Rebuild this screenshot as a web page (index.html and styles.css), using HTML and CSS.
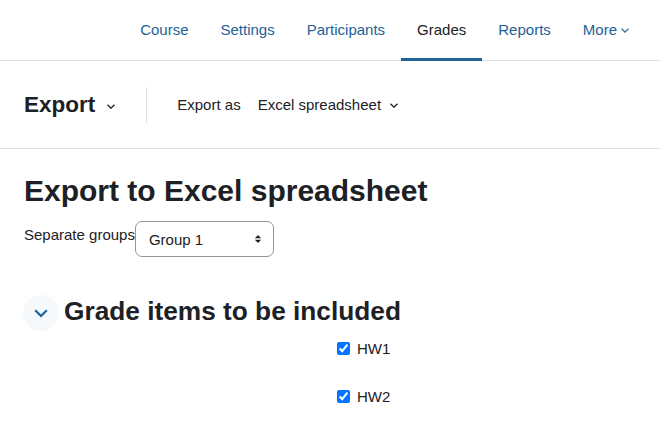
FILE: index.html
```html
<!DOCTYPE html>
<html lang="en">
<head>
<meta charset="utf-8">
<title>Export to Excel spreadsheet</title>
<link rel="stylesheet" href="styles.css">
</head>
<body>
<nav class="secnav">
  <a class="navlink" href="#">Course</a>
  <a class="navlink" href="#">Settings</a>
  <a class="navlink" href="#">Participants</a>
  <a class="navlink active" href="#">Grades</a>
  <a class="navlink" href="#">Reports</a>
  <a class="navlink" href="#">More<svg class="chev-sm" width="8" height="5" viewBox="0 0 8 5"><polyline points="0.5,0.7 4,4.2 7.5,0.7" fill="none" stroke="currentColor" stroke-width="1.2"/></svg></a>
</nav>
<header class="tertiary">
  <div class="pagetitle">Export<svg class="chev-dark" width="8" height="5" viewBox="0 0 8 5"><polyline points="0.5,0.7 4,4.2 7.5,0.7" fill="none" stroke="#1d2125" stroke-width="1.3"/></svg></div>
  <div class="divider"></div>
  <span class="exportas">Export as</span>
  <span class="format">Excel spreadsheet<svg class="chev-dark" width="8" height="5" viewBox="0 0 8 5"><polyline points="0.5,0.7 4,4.2 7.5,0.7" fill="none" stroke="#1d2125" stroke-width="1.3"/></svg></span>
</header>
<main class="content">
  <h2 class="title">Export to Excel spreadsheet</h2>
  <div class="grouprow">
    <label class="grouplabel" for="grp">Separate groups</label>
    <div class="selectwrap">
      <select id="grp" class="groupselect"><option>Group 1</option></select>
      <svg class="updown" width="8" height="10" viewBox="0 0 8 10"><path d="M4 1L0.8 4.2h6.4z M4 9L0.8 5.8h6.4z" fill="#1d2125"/></svg>
    </div>
  </div>
  <div class="sectionhead">
    <span class="collapsebtn"><svg width="14" height="9" viewBox="0 0 14 9"><polyline points="1.2,1.2 7,7 12.8,1.2" fill="none" stroke="#1d6298" stroke-width="2.2"/></svg></span>
    <h3 class="sectiontitle">Grade items to be included</h3>
  </div>
  <div class="items">
    <label class="item"><input type="checkbox" checked><span>HW1</span></label>
    <label class="item"><input type="checkbox" checked><span>HW2</span></label>
  </div>
</main>
</body>
</html>
```

FILE: styles.css
```css
html, body {
  margin: 0;
  padding: 0;
  background: #fff;
}
body {
  font-family: "Liberation Sans", Arial, sans-serif;
  font-size: 15px;
  color: #1d2125;
}
.secnav {
  display: flex;
  justify-content: flex-end;
  height: 60px;
  border-bottom: 1px solid #dee2e6;
  padding-right: 15px;
}
.navlink {
  display: flex;
  align-items: center;
  padding: 0 16px;
  margin-bottom: -1px;
  border-bottom: 3px solid transparent;
  color: #1d6298;
  text-decoration: none;
  font-size: 15px;
}
.navlink.active {
  color: #1d2125;
  border-bottom-color: #1d6298;
}
.chev-sm {
  margin-left: 4px;
  margin-top: 2px;
}
.tertiary {
  display: flex;
  align-items: center;
  height: 87px;
  border-bottom: 1px solid #dee2e6;
  padding-left: 24px;
}
.pagetitle {
  font-size: 22.5px;
  font-weight: bold;
  display: flex;
  align-items: center;
}
.pagetitle .chev-dark {
  margin-left: 12px;
  margin-top: 3px;
}
.divider {
  width: 1px;
  height: 36px;
  background: #dee2e6;
  margin: 0 30px 0 31px;
}
.exportas {
  margin-right: 17px;
}
.format {
  display: flex;
  align-items: center;
}
.format .chev-dark {
  margin-left: 9px;
  margin-top: 1px;
}
.content {
  padding-left: 24px;
}
.title {
  font-size: 30px;
  font-weight: bold;
  line-height: 36px;
  margin: 24px 0 12px 0;
}
.grouprow {
  display: flex;
  align-items: flex-start;
}
.grouplabel {
  line-height: 22.5px;
  padding-top: 3px;
}
.selectwrap {
  position: relative;
}
.groupselect {
  appearance: none;
  -webkit-appearance: none;
  width: 139px;
  height: 36px;
  border: 1px solid #8f959e;
  border-radius: 7px;
  background: #fff;
  font-family: "Liberation Sans", Arial, sans-serif;
  font-size: 15px;
  color: #1d2125;
  padding: 0 0 0 13px;
  margin: 0;
  display: block;
}
.updown {
  position: absolute;
  left: 119px;
  top: 13px;
  pointer-events: none;
}
.sectionhead {
  display: flex;
  align-items: center;
  margin-top: 38px;
}
.collapsebtn {
  width: 36px;
  height: 36px;
  border-radius: 50%;
  background: #f5f9fc;
  display: flex;
  align-items: center;
  justify-content: center;
  margin-left: -1px;
  padding-top: 1px;
  box-sizing: border-box;
}
.sectiontitle {
  font-size: 26.25px;
  font-weight: bold;
  line-height: 31.5px;
  margin: 0 0 3px 5px;
}
.items {
  display: flex;
  flex-direction: column;
  gap: 25.5px;
  padding-left: 313px;
  margin-top: 6px;
}
.item {
  display: flex;
  align-items: center;
  height: 22.5px;
}
.item input {
  width: 13px;
  height: 13px;
  margin: 0 7px 0 0;
}
```
